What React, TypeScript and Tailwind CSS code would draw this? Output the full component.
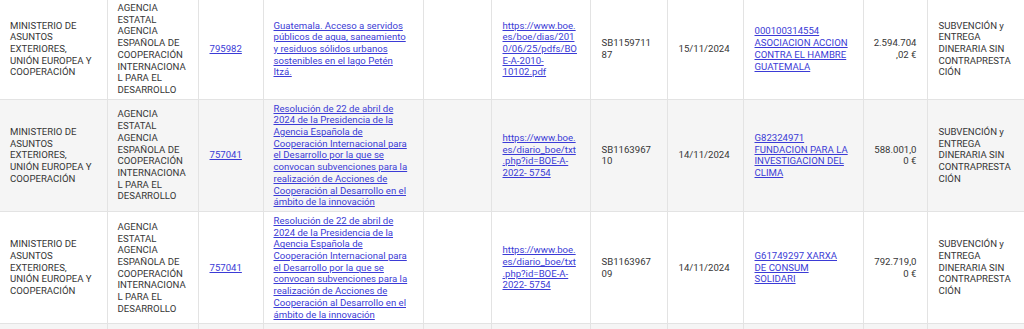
import { Fragment } from 'react';

type Row = {
  organo: string;
  agencia: string;
  codigo: string;
  convocatoria: string;
  url: string;
  ref: string;
  fecha: string;
  beneficiario: string;
  importe: string;
  instrumento: string;
};

const RES_TEXT =
  'Resolución de 22 de abril de 2024 de la Presidencia de la Agencia Española de Cooperación Internacional para el Desarrollo por la que se convocan subvenciones para la realización de Acciones de Cooperación al Desarrollo en el ámbito de la innovación';

const ROWS: Row[] = [
  {
    organo: 'MINISTERIO DE ASUNTOS EXTERIORES, UNIÓN EUROPEA Y COOPERACIÓN',
    agencia: 'AGENCIA ESTATAL AGENCIA ESPAÑOLA DE COOPERACIÓN INTERNACIONAL PARA EL DESARROLLO',
    codigo: '795982',
    convocatoria:
      'Guatemala. Acceso a servidos públicos de agua, saneamiento y residuos sólidos urbanos sostenibles en el lago Petén Itzá.',
    url: 'https://www.boe.es/boe/dias/2010/06/25/pdfs/BOE-A-2010- 10102.pdf',
    ref: 'SB115971187',
    fecha: '15/11/2024',
    beneficiario: '000100314554 ASOCIACION ACCION CONTRA EL HAMBRE GUATEMALA',
    importe: '2.594.704,02 €',
    instrumento: 'SUBVENCIÓN y ENTREGA DINERARIA SIN CONTRAPRESTACIÓN',
  },
  {
    organo: 'MINISTERIO DE ASUNTOS EXTERIORES, UNIÓN EUROPEA Y COOPERACIÓN',
    agencia: 'AGENCIA ESTATAL AGENCIA ESPAÑOLA DE COOPERACIÓN INTERNACIONAL PARA EL DESARROLLO',
    codigo: '757041',
    convocatoria: RES_TEXT,
    url: 'https://www.boe.es/diario_boe/txt.php?id=BOE-A-2022- 5754',
    ref: 'SB116396710',
    fecha: '14/11/2024',
    beneficiario: 'G82324971 FUNDACION PARA LA INVESTIGACION DEL CLIMA',
    importe: '588.001,00 €',
    instrumento: 'SUBVENCIÓN y ENTREGA DINERARIA SIN CONTRAPRESTACIÓN',
  },
  {
    organo: 'MINISTERIO DE ASUNTOS EXTERIORES, UNIÓN EUROPEA Y COOPERACIÓN',
    agencia: 'AGENCIA ESTATAL AGENCIA ESPAÑOLA DE COOPERACIÓN INTERNACIONAL PARA EL DESARROLLO',
    codigo: '757041',
    convocatoria: RES_TEXT,
    url: 'https://www.boe.es/diario_boe/txt.php?id=BOE-A-2022- 5754',
    ref: 'SB116396709',
    fecha: '14/11/2024',
    beneficiario: 'G61749297 XARXA DE CONSUM SOLIDARI',
    importe: '792.719,00 €',
    instrumento: 'SUBVENCIÓN y ENTREGA DINERARIA SIN CONTRAPRESTACIÓN',
  },
  {
    organo: 'MINISTERIO DE ASUNTOS EXTERIORES, UNIÓN EUROPEA Y COOPERACIÓN',
    agencia: 'AGENCIA ESTATAL AGENCIA ESPAÑOLA DE COOPERACIÓN INTERNACIONAL PARA EL DESARROLLO',
    codigo: '757041',
    convocatoria: RES_TEXT,
    url: 'https://www.boe.es/diario_boe/txt.php?id=BOE-A-2022- 5754',
    ref: 'SB116396708',
    fecha: '14/11/2024',
    beneficiario: 'G00000000',
    importe: '500.000,00 €',
    instrumento: 'SUBVENCIÓN y ENTREGA DINERARIA SIN CONTRAPRESTACIÓN',
  },
];

const cell =
  'border-l border-b border-[#e3e3e3] py-[3px] align-middle [overflow-wrap:anywhere]';
const link = 'text-[#3b3bd6] underline underline-offset-[1px]';

export default function App() {
  return (
    <div className="h-[329px] w-[1024px] overflow-hidden bg-white font-['Roboto',sans-serif] text-[9.6px] leading-[11.7px] text-[#363636]">
      <table className="-mt-[1px] w-[1034px] table-fixed border-collapse">
        <colgroup>
          <col className="w-[107px]" />
          <col className="w-[91px]" />
          <col className="w-[65px]" />
          <col className="w-[160px]" />
          <col className="w-[68px]" />
          <col className="w-[99px]" />
          <col className="w-[77px]" />
          <col className="w-[76px]" />
          <col className="w-[120px]" />
          <col className="w-[64px]" />
          <col className="w-[107px]" />
        </colgroup>
        <tbody>
          {ROWS.map((r, i) => (
            <Fragment key={i}>
              <tr className={i % 2 === 1 ? 'bg-[#f5f5f5]' : 'bg-white'}>
                <td className={`${cell} border-l-0 px-[10px]`}>{r.organo}</td>
                <td className={`${cell} px-[10px]`}>{r.agencia}</td>
                <td className={`${cell} px-[11px]`}>
                  <a href="#" className={link}>{r.codigo}</a>
                </td>
                <td className={`${cell} px-[10px]`}>
                  <a href="#" className={link}>{r.convocatoria}</a>
                </td>
                <td className={`${cell} px-[11px]`}></td>
                <td className={`${cell} pl-[11px] pr-[12px]`}>
                  <a href="#" className={link}>{r.url}</a>
                </td>
                <td className={`${cell} px-[11px]`}>{r.ref}</td>
                <td className={`${cell} px-[11px]`}>{r.fecha}</td>
                <td className={`${cell} pl-[11px] pr-[14px]`}>
                  <a href="#" className={link}>{r.beneficiario}</a>
                </td>
                <td className={`${cell} px-[10px] text-right`}>{r.importe}</td>
                <td className={`${cell} pl-[11px] pr-[20px]`}>{r.instrumento}</td>
              </tr>
            </Fragment>
          ))}
        </tbody>
      </table>
    </div>
  );
}
